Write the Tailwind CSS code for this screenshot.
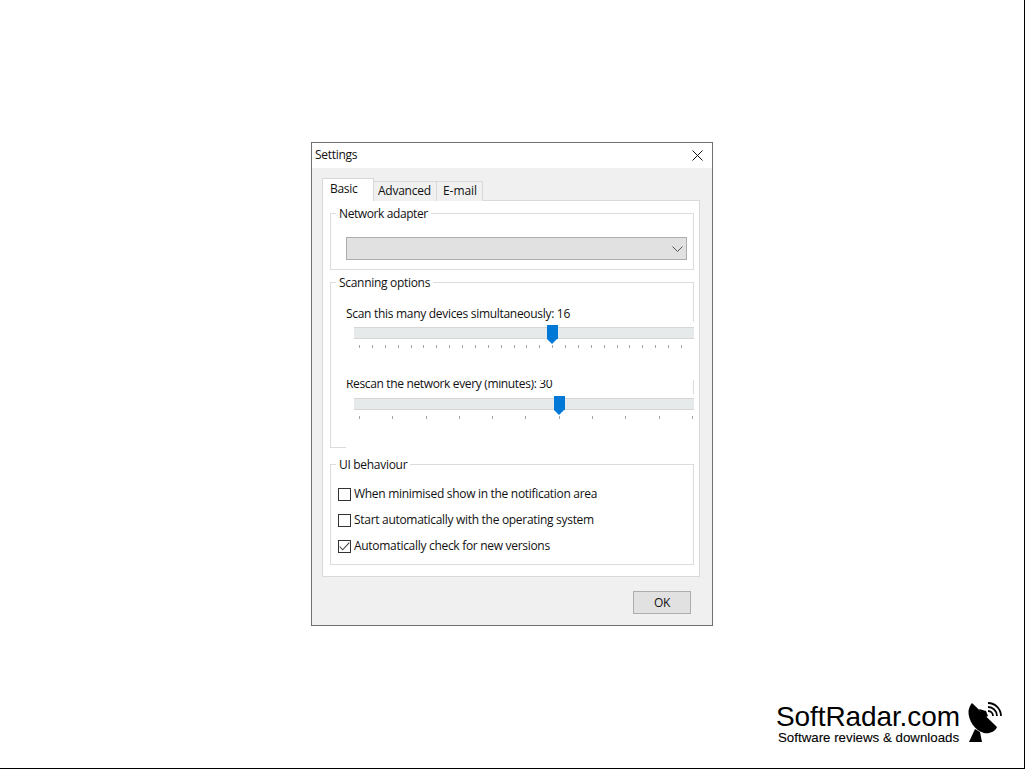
<!DOCTYPE html>
<html lang="en">
<head>
  <meta charset="UTF-8" />
  <title>Settings</title>
  <script src="https://cdn.jsdelivr.net/npm/@tailwindcss/browser@4"></script>
</head>
<body class="bg-white overflow-hidden font-['Open_Sans',sans-serif] text-[12px] leading-[16px] tracking-[-0.3px] text-[#111]">
<div class="relative w-[1025px] h-[769px] border-r border-b border-black pl-[311px] pt-[142px]">

  <!-- dialog -->
  <div class="w-[402px] h-[484px] border border-[#707070] bg-[#f0f0f0] flex flex-col">
    <div class="h-[25px] bg-white flex items-center justify-between pl-[3px] pr-[9px]">
      <span class="pb-[2px]">Settings</span>
      <svg width="11" height="11" viewBox="0 0 11 11" fill="none" stroke="#111" stroke-width="1"><path d="M.5.5l10 10M10.5.5l-10 10"/></svg>
    </div>

    <div class="pl-[10px] pt-[10px] w-[388px]">
      <!-- tabs -->
      <div class="flex items-end h-[23px] -mb-px relative z-10">
        <div class="w-[52px] h-[23px] bg-white border border-b-0 border-[#d9d9d9] pl-[7px] pt-[2px]">Basic</div>
        <div class="w-[63px] h-[20px] bg-[#f0f0f0] border-t border-r border-[#d9d9d9] pl-[4px] pt-[1px] tracking-[-0.25px]">Advanced</div>
        <div class="w-[46px] h-[20px] bg-[#f0f0f0] border-t border-r border-[#d9d9d9] pl-[6px] pt-[1px] tracking-[-0.05px]">E-mail</div>
      </div>

      <!-- tab panel -->
      <div class="w-[378px] h-[377px] bg-white border border-[#d9d9d9] pl-[7px] pt-[12px]">

        <div class="relative w-[364px] h-[57px] border border-[#dcdcdc] pl-[15px] pt-[23px]">
          <span class="absolute left-[5px] -top-[8px] bg-white px-[3px] tracking-[-0.4px]">Network adapter</span>
          <div class="w-[341px] h-[23px] bg-[#e1e1e1] border border-[#adadad] flex items-center justify-end pr-[3px]">
            <svg width="11" height="6" viewBox="0 0 11 6" fill="none" stroke="#555" stroke-width="1"><path d="M.5.5l5 5 5-5"/></svg>
          </div>
        </div>

        <!-- the slider boxes paint over the group's right and bottom edges and the top of the second label -->
        <div class="relative w-[364px] h-[166px] mt-[12px] border border-[#dcdcdc] pl-[15px] pt-[23px]">
          <span class="absolute left-[5px] -top-[8px] bg-white px-[3px]">Scanning options</span>
          <div class="h-[16px]">Scan this many devices simultaneously: 16</div>
          <div class="relative z-10 w-[348px] h-[58px] bg-white pt-[5px]">
            <div class="relative ml-[8px] h-[12px] bg-[#e7eaea] border-y border-[#d6d6d6]">
              <div class="absolute left-[193px] -top-[3px] w-[11px] h-[14px] bg-[#0078d7]"></div>
              <div class="absolute left-[193px] top-[11px] w-0 h-0 border-x-[5.5px] border-x-transparent border-t-[5px] border-t-[#0078d7]"></div>
            </div>
            <div id="ticks1" class="flex justify-between ml-[13px] w-[323px] mt-[6px]"></div>
          </div>
          <div class="h-[18px] -mt-[4px] tracking-[-0.35px]">Rescan the network every (minutes): 30</div>
          <div class="relative z-10 w-[348px] h-[54px] bg-white pt-[4px]">
            <div class="relative ml-[8px] h-[12px] bg-[#e7eaea] border-y border-[#d6d6d6]">
              <div class="absolute left-[200px] -top-[3px] w-[11px] h-[14px] bg-[#0078d7]"></div>
              <div class="absolute left-[200px] top-[11px] w-0 h-0 border-x-[5.5px] border-x-transparent border-t-[5px] border-t-[#0078d7]"></div>
            </div>
            <div id="ticks2" class="flex justify-between ml-[13px] w-[334px] mt-[6px]"></div>
          </div>
        </div>

        <div class="relative w-[364px] h-[101px] mt-[16px] border border-[#dcdcdc] pl-[7px] pt-[21px] flex flex-col gap-[10px]">
          <span class="absolute left-[5px] -top-[8px] bg-white px-[3px]">UI behaviour</span>
          <label class="flex items-center gap-[3px] h-[16px]">
            <span class="w-[13px] h-[13px] border border-[#333] bg-white"></span>
            <span>When minimised show in the notification area</span>
          </label>
          <label class="flex items-center gap-[3px] h-[16px]">
            <span class="w-[13px] h-[13px] border border-[#333] bg-white"></span>
            <span>Start automatically with the operating system</span>
          </label>
          <label class="flex items-center gap-[3px] h-[16px]">
            <span class="w-[13px] h-[13px] border border-[#333] bg-white flex items-center justify-center">
              <svg width="11" height="9" viewBox="0 0 11 9" fill="none" stroke="#444" stroke-width="1.1"><path d="M.7 4.5l3 3.3L10.3.7"/></svg>
            </span>
            <span>Automatically check for new versions</span>
          </label>
        </div>
      </div>
    </div>

    <div class="flex justify-end pr-[21px] pt-[14px]">
      <div class="w-[58px] h-[23px] bg-[#e1e1e1] border border-[#adadad] flex items-center justify-center">OK</div>
    </div>
  </div>

  <!-- watermark -->
  <div class="absolute left-[776px] top-[702px] flex tracking-normal">
    <div class="w-[184px] font-['Liberation_Sans',sans-serif] text-black">
      <div class="text-[28px] leading-[29px] tracking-[-0.1px] whitespace-nowrap">SoftRadar.com</div>
      <div class="text-[13.3px] leading-[13px] pl-[2px] whitespace-nowrap [-webkit-text-stroke:0.1px_black]">Software reviews &amp; downloads</div>
    </div>
    <svg class="ml-[8px]" width="34" height="41" viewBox="0 0 34 41" fill="black">
      <path d="M4 1L29 25C27 30 21 32 16 31C7 29 0 18 .5 9C1 6 2 3 4 1Z"/>
      <path d="M11 7L18 9L20 14L16 16Z"/>
      <path d="M7 27L12 30L14 40H1Z"/>
      <path d="M20 1A13 13 0 0 1 33 14M20 5A9 9 0 0 1 29 14M20 9A5 5 0 0 1 25 14" fill="none" stroke="black" stroke-width="1.8"/>
    </svg>
  </div>
</div>
<script>
  // tick marks under the two sliders
  function addTicks(id, count) {
    const box = document.getElementById(id);
    for (let i = 0; i < count; i++) {
      const t = document.createElement("span");
      t.className = "w-px h-[3px] bg-[#a6a6a6]";
      box.appendChild(t);
    }
  }
  addTicks("ticks1", 26);
  addTicks("ticks2", 11);
</script>
</body>
</html>
